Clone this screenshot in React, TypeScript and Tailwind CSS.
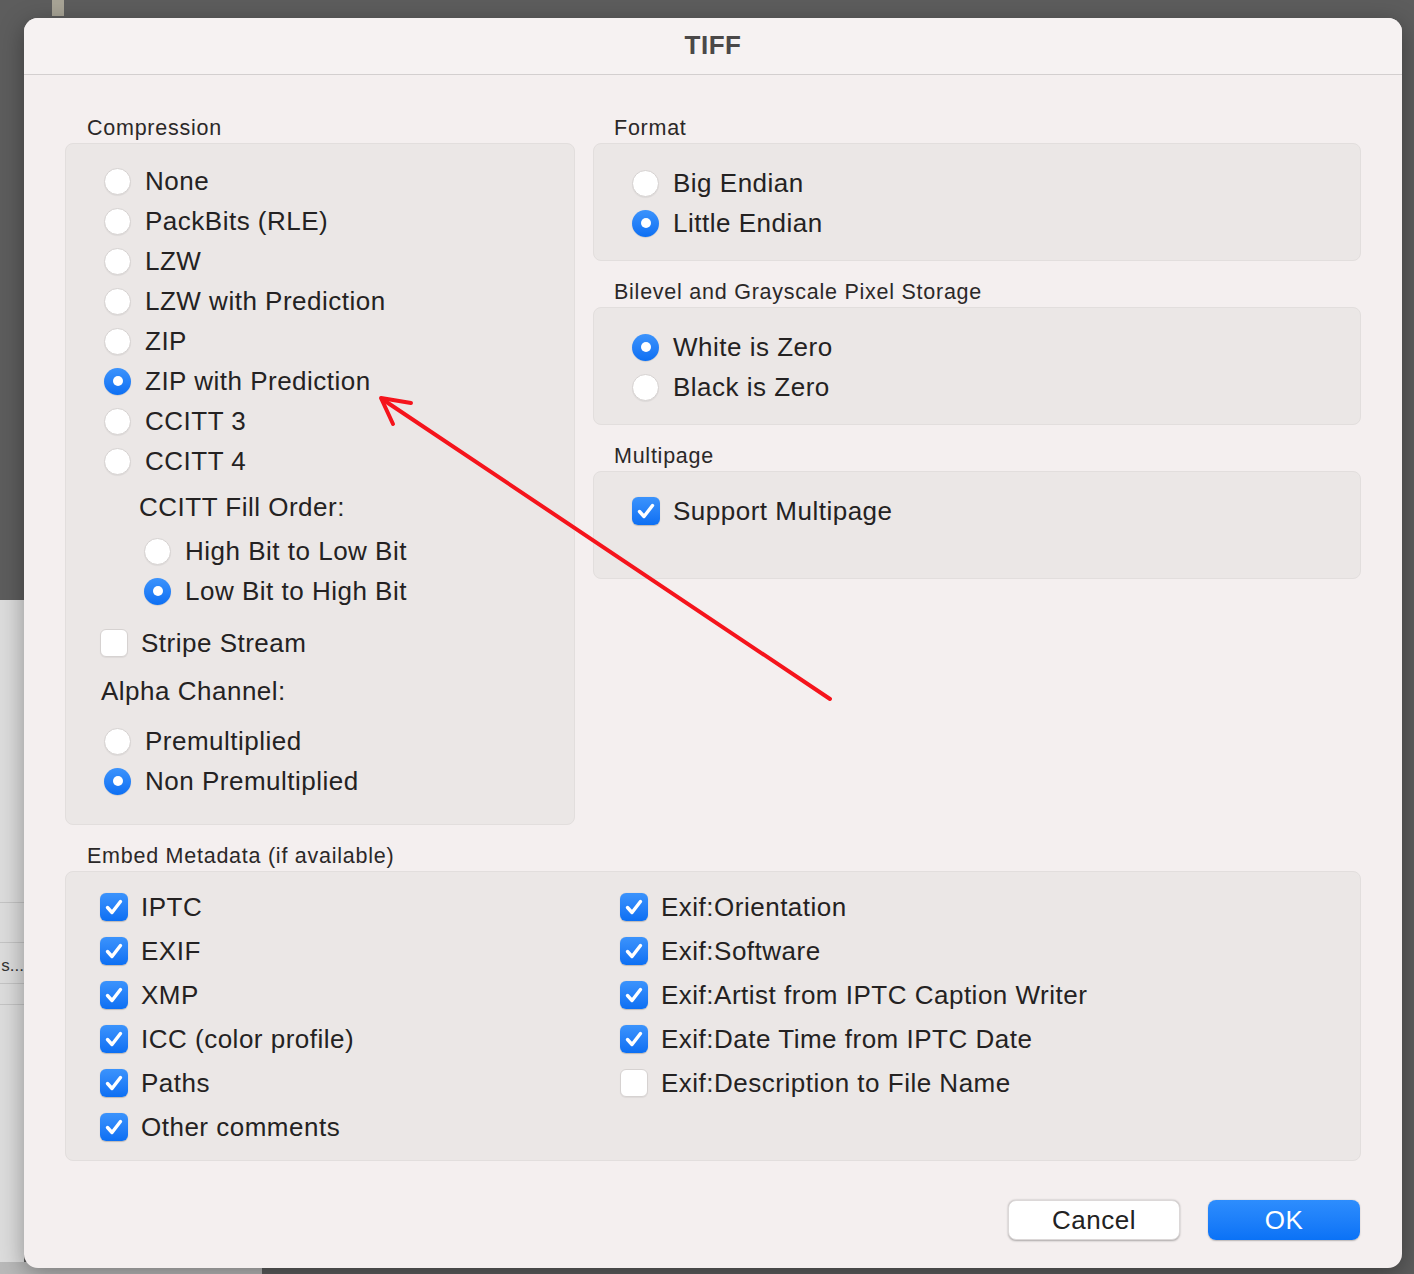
import React from 'react';

const FONT = { fontFamily: '"Liberation Sans", Arial, sans-serif' };

function Radio({ checked }: { checked?: boolean }) {
  if (checked) {
    return (
      <span className="w-[27px] h-[27px] shrink-0 rounded-full bg-linear-to-b from-[#3b93fc] to-[#0b6ff3] flex items-center justify-center shadow-[0_0.5px_1px_rgba(0,0,0,0.2)]">
        <span className="w-[10px] h-[10px] rounded-full bg-white" />
      </span>
    );
  }
  return (
    <span className="w-[27px] h-[27px] shrink-0 rounded-full bg-white border border-[#d6d2d1] shadow-[0_1px_1px_rgba(0,0,0,0.06)]" />
  );
}

function Check({ checked }: { checked?: boolean }) {
  if (!checked) {
    return (
      <span className="w-[28px] h-[28px] shrink-0 rounded-[6px] bg-white border border-[#d6d2d1] shadow-[0_1px_1px_rgba(0,0,0,0.06)]" />
    );
  }
  return (
    <span className="w-[28px] h-[28px] shrink-0 rounded-[6px] bg-linear-to-b from-[#3b93fc] to-[#0b6ff3] flex items-center justify-center shadow-[0_0.5px_1px_rgba(0,0,0,0.2)]">
      <svg width="28" height="28" viewBox="0 0 28 28" fill="none">
        <path d="M7.5 14.5 L12 19.5 L20.5 8.5" stroke="white" strokeWidth="3.4" strokeLinecap="round" strokeLinejoin="round" />
      </svg>
    </span>
  );
}

function RadioRow({ label, checked, className = '' }: { label: string; checked?: boolean; className?: string }) {
  return (
    <div className={`h-[40px] flex items-center gap-[14px] ${className}`}>
      <Radio checked={checked} />
      <span>{label}</span>
    </div>
  );
}

function CheckRow({ label, checked, h = 'h-[40px]', className = '' }: { label: string; checked?: boolean; h?: string; className?: string }) {
  return (
    <div className={`${h} flex items-center gap-[13px] ${className}`}>
      <Check checked={checked} />
      <span>{label}</span>
    </div>
  );
}

function GroupLabel({ children, className = '' }: { children: React.ReactNode; className?: string }) {
  return (
    <div className={`h-[30px] flex items-center text-[21.5px] text-[#2b2828] tracking-[0.75px] ${className}`}>
      {children}
    </div>
  );
}

const panel = 'rounded-[8px] bg-[#ebe7e6] border border-[#e2dedd]';

export default function App() {
  return (
    <div
      className="relative w-[1414px] h-[1274px] overflow-hidden bg-[#5d5d5d] pt-[18px] pl-[24px]"
      style={FONT}
    >
      {/* desktop behind the sheet */}
      <div className="absolute left-[52px] top-0 w-[12px] h-[16px] bg-[#a8a496]" />
      <div className="absolute left-0 top-[600px] w-[24px] h-[674px] bg-[#dcdcdc]">
        <div className="mt-[302px] h-px bg-[#c4c4c4]" />
        <div className="mt-[39px] h-px bg-[#c4c4c4]" />
        <div className="h-[40px] pt-[6px] flex items-center justify-end text-[17px] text-[#333] whitespace-nowrap">
          s...
        </div>
        <div className="h-px bg-[#c4c4c4]" />
        <div className="mt-[20px] h-px bg-[#c4c4c4]" />
      </div>
      <div className="absolute left-0 top-[1262px] w-[262px] h-[12px] bg-[#b9b9b9]" />

      {/* sheet */}
      <div className="relative w-[1378px] h-[1250px] rounded-[14px] bg-[#f4efef] shadow-[0_6px_24px_rgba(0,0,0,0.35)] flex flex-col text-[26px] text-[#242222] tracking-[0.5px]">
        <div className="h-[57px] shrink-0 flex items-center justify-center border-b border-[#d3cfcf] bg-[#f6f2f2] rounded-t-[14px]">
          <span className="text-[26px] font-bold text-[#4a4848] tracking-[0.5px] -mt-[2px]">TIFF</span>
        </div>

        <div className="px-[41px] pt-[38px] flex gap-[18px]">
          {/* left column */}
          <div className="w-[510px] shrink-0 flex flex-col">
            <GroupLabel className="pl-[22px]">Compression</GroupLabel>
            <div className={`${panel} h-[682px] pt-[17px] pl-[38px]`}>
              <RadioRow label="None" />
              <RadioRow label="PackBits (RLE)" />
              <RadioRow label="LZW" />
              <RadioRow label="LZW with Prediction" />
              <RadioRow label="ZIP" />
              <RadioRow label="ZIP with Prediction" checked />
              <RadioRow label="CCITT 3" />
              <RadioRow label="CCITT 4" />
              <div className="h-[40px] mt-[6px] flex items-center pl-[35px]">CCITT Fill Order:</div>
              <div className="pl-[40px] mt-[4px]">
                <RadioRow label="High Bit to Low Bit" />
                <RadioRow label="Low Bit to High Bit" checked />
              </div>
              <CheckRow label="Stripe Stream" className="mt-[12px] -ml-[4px]" />
              <div className="h-[40px] mt-[8px] flex items-center -ml-[3px]">Alpha Channel:</div>
              <RadioRow label="Premultiplied" className="mt-[10px]" />
              <RadioRow label="Non Premultiplied" checked />
            </div>
          </div>

          {/* right column */}
          <div className="flex-1 flex flex-col">
            <GroupLabel className="pl-[21px]">Format</GroupLabel>
            <div className={`${panel} h-[118px] pt-[19px] pl-[38px]`}>
              <RadioRow label="Big Endian" />
              <RadioRow label="Little Endian" checked />
            </div>
            <GroupLabel className="pl-[21px] mt-[16px]">Bilevel and Grayscale Pixel Storage</GroupLabel>
            <div className={`${panel} h-[118px] pt-[19px] pl-[38px]`}>
              <RadioRow label="White is Zero" checked />
              <RadioRow label="Black is Zero" />
            </div>
            <GroupLabel className="pl-[21px] mt-[16px]">Multipage</GroupLabel>
            <div className={`${panel} h-[108px] pt-[19px] pl-[38px]`}>
              <CheckRow label="Support Multipage" checked />
            </div>
          </div>
        </div>

        <div className="px-[41px] mt-[16px]">
          <GroupLabel className="pl-[22px]">Embed Metadata (if available)</GroupLabel>
          <div className={`${panel} h-[290px] pt-[13px] pl-[34px] grid grid-cols-[520px_1fr]`}>
            <div className="flex flex-col">
              <CheckRow label="IPTC" checked h="h-[44px]" />
              <CheckRow label="EXIF" checked h="h-[44px]" />
              <CheckRow label="XMP" checked h="h-[44px]" />
              <CheckRow label="ICC (color profile)" checked h="h-[44px]" />
              <CheckRow label="Paths" checked h="h-[44px]" />
              <CheckRow label="Other comments" checked h="h-[44px]" />
            </div>
            <div className="flex flex-col">
              <CheckRow label="Exif:Orientation" checked h="h-[44px]" />
              <CheckRow label="Exif:Software" checked h="h-[44px]" />
              <CheckRow label="Exif:Artist from IPTC Caption Writer" checked h="h-[44px]" />
              <CheckRow label="Exif:Date Time from IPTC Date" checked h="h-[44px]" />
              <CheckRow label="Exif:Description to File Name" h="h-[44px]" />
            </div>
          </div>
        </div>

        <div className="mt-[39px] pr-[42px] flex justify-end gap-[28px]">
          <button
            type="button"
            className="w-[172px] h-[40px] rounded-[8px] bg-white text-[#222] text-[26px] tracking-[0.5px] shadow-[0_0.5px_2px_rgba(0,0,0,0.3)] border border-[#dcd8d8]"
          >
            Cancel
          </button>
          <button
            type="button"
            className="w-[152px] h-[40px] rounded-[8px] bg-linear-to-b from-[#2d8dfd] to-[#0a72f6] text-white text-[26px] tracking-[0.5px] shadow-[0_0.5px_1.5px_rgba(0,0,0,0.25)]"
          >
            OK
          </button>
        </div>
      </div>

      {/* red annotation arrow */}
      <svg className="absolute left-0 top-0 pointer-events-none" width="1414" height="1274">
        <path d="M830 699 L382 399" stroke="#f5141c" strokeWidth="4" strokeLinecap="round" fill="none" />
        <path d="M411 403 L381 398 L393 424" stroke="#f5141c" strokeWidth="4" strokeLinecap="round" strokeLinejoin="round" fill="none" />
      </svg>
    </div>
  );
}
